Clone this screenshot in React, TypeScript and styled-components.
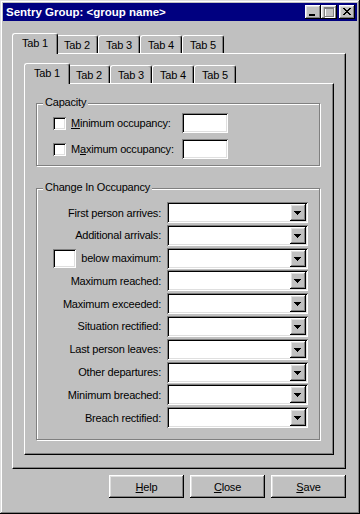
import React from 'react';
import styled, { createGlobalStyle } from 'styled-components';

//

const GlobalStyle = createGlobalStyle`
    body {
        margin: 0;
        background: #c0c0c0;
        font-family: "Liberation Sans", Arial, sans-serif;
        font-size: 11px;
        letter-spacing: -0.2px;
        color: #000;
    }
`;

const raised = `
    box-shadow: inset -1px -1px #000, inset 1px 1px #fff, inset -2px -2px #808080, inset 2px 2px #dfdfdf;
`;

const sunken = `
    box-shadow: inset 1px 1px #808080, inset -1px -1px #fff, inset 2px 2px #000, inset -2px -2px #dfdfdf;
`;

const Window = styled.div`
    width: 360px;
    height: 514px;
    box-sizing: border-box;
    padding: 3px;
    background: #c0c0c0;
    box-shadow: inset -1px -1px #000, inset 1px 1px #dfdfdf, inset -2px -2px #808080, inset 2px 2px #fff;
    display: flex;
    flex-direction: column;
`;

const TitleBar = styled.div`
    height: 18px;
    background: #000080;
    color: #fff;
    font-weight: bold;
    font-size: 11.5px;
    letter-spacing: 0;
    padding: 0 2px 0 3px;
    display: flex;
    align-items: center;
    justify-content: space-between;
`;

const CaptionButtons = styled.div`
    display: flex;
`;

const CaptionButton = styled.div<{ $gap?: boolean }>`
    width: 16px;
    height: 14px;
    margin-left: ${p => (p.$gap ? '2px' : '0')};
    background: #c0c0c0;
    ${raised}
    svg { display: block; }
`;

const Content = styled.div`
    flex: 1;
    padding: 12px 11px 13px 9px;
    display: flex;
    flex-direction: column;
`;

const TabRow = styled.div`
    display: flex;
    align-items: flex-end;
    height: 20px;
    padding-left: 2px;
`;

const Tab = styled.div<{ $active?: boolean }>`
    width: ${p => (p.$active ? '46px' : '42px')};
    height: ${p => (p.$active ? '21px' : '18px')};
    margin: ${p => (p.$active ? '0 -2px -1px' : '0')};
    position: ${p => (p.$active ? 'relative' : 'static')};
    z-index: ${p => (p.$active ? 1 : 0)};
    padding-bottom: ${p => (p.$active ? '2px' : '0')};
    box-sizing: border-box;
    background: #c0c0c0;
    border: 1px solid #fff;
    border-bottom: none;
    border-right-color: #000;
    border-radius: 3px 3px 0 0;
    box-shadow: inset -1px 0 #808080;
    display: flex;
    align-items: center;
    justify-content: center;
    white-space: nowrap;
`;

const Panel = styled.div<{ $w: number; $h: number; $pad: string }>`
    width: ${p => p.$w}px;
    height: ${p => p.$h}px;
    box-sizing: border-box;
    padding: ${p => p.$pad};
    border-top: 1px solid #fff;
    border-left: 1px solid #fff;
    border-right: 1px solid #000;
    border-bottom: 1px solid #000;
    box-shadow: inset -1px -1px #808080;
`;

const GroupBox = styled.div<{ $pad: string; $mt?: number }>`
    width: 284px;
    box-sizing: border-box;
    margin-top: ${p => p.$mt || 0}px;
    padding: ${p => p.$pad};
    border: 1px solid #808080;
    box-shadow: 1px 1px 0 #fff, inset 1px 1px 0 #fff;
`;

const GroupTitle = styled.div<{ $mb: number }>`
    width: fit-content;
    margin: -8px 0 ${p => p.$mb}px -10px;
    padding: 0 2px;
    line-height: 13px;
    background: #c0c0c0;
`;

const CapacityGrid = styled.div`
    display: grid;
    grid-template-columns: 13px 106px 46px;
    grid-auto-rows: 20px;
    column-gap: 5px;
    row-gap: 6px;
    align-items: center;
`;

const CheckBox = styled.div`
    width: 13px;
    height: 13px;
    background: #fff;
    ${sunken}
`;

const TextBox = styled.div<{ $w: number; $h: number }>`
    width: ${p => p.$w}px;
    height: ${p => p.$h}px;
    background: #fff;
    ${sunken}
`;

const FieldLabel = styled.span`
    white-space: nowrap;
`;

const OccGrid = styled.div`
    display: grid;
    grid-template-columns: 108px 141px;
    grid-auto-rows: 21px;
    column-gap: 6px;
    row-gap: 1.8px;
    align-items: center;
`;

const RowLabel = styled.div`
    text-align: right;
    white-space: nowrap;
`;

const BelowMaxCell = styled.div`
    display: flex;
    align-items: center;
    justify-content: space-between;
`;

const Combo = styled.div`
    height: 21px;
    box-sizing: border-box;
    padding: 2px;
    background: #fff;
    ${sunken}
    display: flex;
    justify-content: flex-end;
`;

const DropButton = styled.div`
    width: 16px;
    height: 17px;
    background: #c0c0c0;
    ${raised}
    svg { display: block; }
`;

const Footer = styled.div`
    display: flex;
    justify-content: flex-end;
    gap: 6px;
    margin-top: 6px;
`;

const Button = styled.button`
    width: 75px;
    height: 23px;
    padding: 0;
    border: none;
    background: #c0c0c0;
    font-family: inherit;
    font-size: 11px;
    letter-spacing: -0.2px;
    color: #000;
    ${raised}
`;

const closeGlyph = [
    'XX....XX',
    '.XX..XX.',
    '..XXXX..',
    '...XX...',
    '..XXXX..',
    '.XX..XX.',
    'XX....XX',
];

const Pixels = ({ rows, x, y, color }: { rows: string[]; x: number; y: number; color: string }) => (
    <>
        {rows.map((r, j) =>
            r.split('').map((c, i) =>
                c === 'X' ? <rect key={`${i}-${j}`} x={x + i} y={y + j} width={1} height={1} fill={color} /> : null
            )
        )}
    </>
);

const ArrowDown = () => (
    <svg width="16" height="17" shapeRendering="crispEdges">
        <rect x="4" y="7" width="7" height="1" fill="#000" />
        <rect x="5" y="8" width="5" height="1" fill="#000" />
        <rect x="6" y="9" width="3" height="1" fill="#000" />
        <rect x="7" y="10" width="1" height="1" fill="#000" />
    </svg>
);

const tabs = ['Tab 1', 'Tab 2', 'Tab 3', 'Tab 4', 'Tab 5'];

const occupancyRows = [
    'First person arrives:',
    'Additional arrivals:',
    'below maximum:',
    'Maximum reached:',
    'Maximum exceeded:',
    'Situation rectified:',
    'Last person leaves:',
    'Other departures:',
    'Minimum breached:',
    'Breach rectified:',
];

const TabStrip = () => (
    <TabRow>
        {tabs.map((t, i) => (
            <Tab key={t} $active={i === 0}>{t}</Tab>
        ))}
    </TabRow>
);

export default function App() {
    return (
        <>
            <GlobalStyle />
            <Window>
                <TitleBar>
                    <span>Sentry Group: &lt;group name&gt;</span>
                    <CaptionButtons>
                        <CaptionButton>
                            <svg width="16" height="14" shapeRendering="crispEdges">
                                <rect x="4" y="9" width="6" height="2" fill="#000" />
                            </svg>
                        </CaptionButton>
                        <CaptionButton>
                            <svg width="16" height="14" shapeRendering="crispEdges">
                                <rect x="4" y="3" width="9" height="9" fill="none" stroke="#fff" strokeWidth="1" transform="translate(0.5 0.5)" />
                                <rect x="3" y="2" width="9" height="9" fill="none" stroke="#808080" strokeWidth="1" transform="translate(0.5 0.5)" />
                                <rect x="3" y="3" width="10" height="1" fill="#808080" />
                            </svg>
                        </CaptionButton>
                        <CaptionButton $gap>
                            <svg width="16" height="14" shapeRendering="crispEdges">
                                <Pixels rows={closeGlyph} x={4} y={3} color="#000" />
                            </svg>
                        </CaptionButton>
                    </CaptionButtons>
                </TitleBar>
                <Content>
                    <TabStrip />
                    <Panel $w={334} $h={416} $pad="9px 0 0 11px">
                        <TabStrip />
                        <Panel $w={310} $h={372} $pad="19px 0 0 11px">
                            <GroupBox $pad="0 0 6px 16px">
                                <GroupTitle $mb={4}>Capacity</GroupTitle>
                                <CapacityGrid>
                                    <CheckBox />
                                    <FieldLabel><u>M</u>inimum occupancy:</FieldLabel>
                                    <TextBox $w={46} $h={20} />
                                    <CheckBox />
                                    <FieldLabel>M<u>a</u>ximum occupancy:</FieldLabel>
                                    <TextBox $w={46} $h={20} />
                                </CapacityGrid>
                            </GroupBox>
                            <GroupBox $pad="0 11px 11px 16px" $mt={22}>
                                <GroupTitle $mb={8}>Change In Occupancy</GroupTitle>
                                <OccGrid>
                                    {occupancyRows.map(label => (
                                        <React.Fragment key={label}>
                                            {label === 'below maximum:' ? (
                                                <BelowMaxCell>
                                                    <TextBox $w={23} $h={19} />
                                                    <RowLabel>{label}</RowLabel>
                                                </BelowMaxCell>
                                            ) : (
                                                <RowLabel>{label}</RowLabel>
                                            )}
                                            <Combo>
                                                <DropButton><ArrowDown /></DropButton>
                                            </Combo>
                                        </React.Fragment>
                                    ))}
                                </OccGrid>
                            </GroupBox>
                        </Panel>
                    </Panel>
                    <Footer>
                        <Button><u>H</u>elp</Button>
                        <Button><u>C</u>lose</Button>
                        <Button><u>S</u>ave</Button>
                    </Footer>
                </Content>
            </Window>
        </>
    );
}
